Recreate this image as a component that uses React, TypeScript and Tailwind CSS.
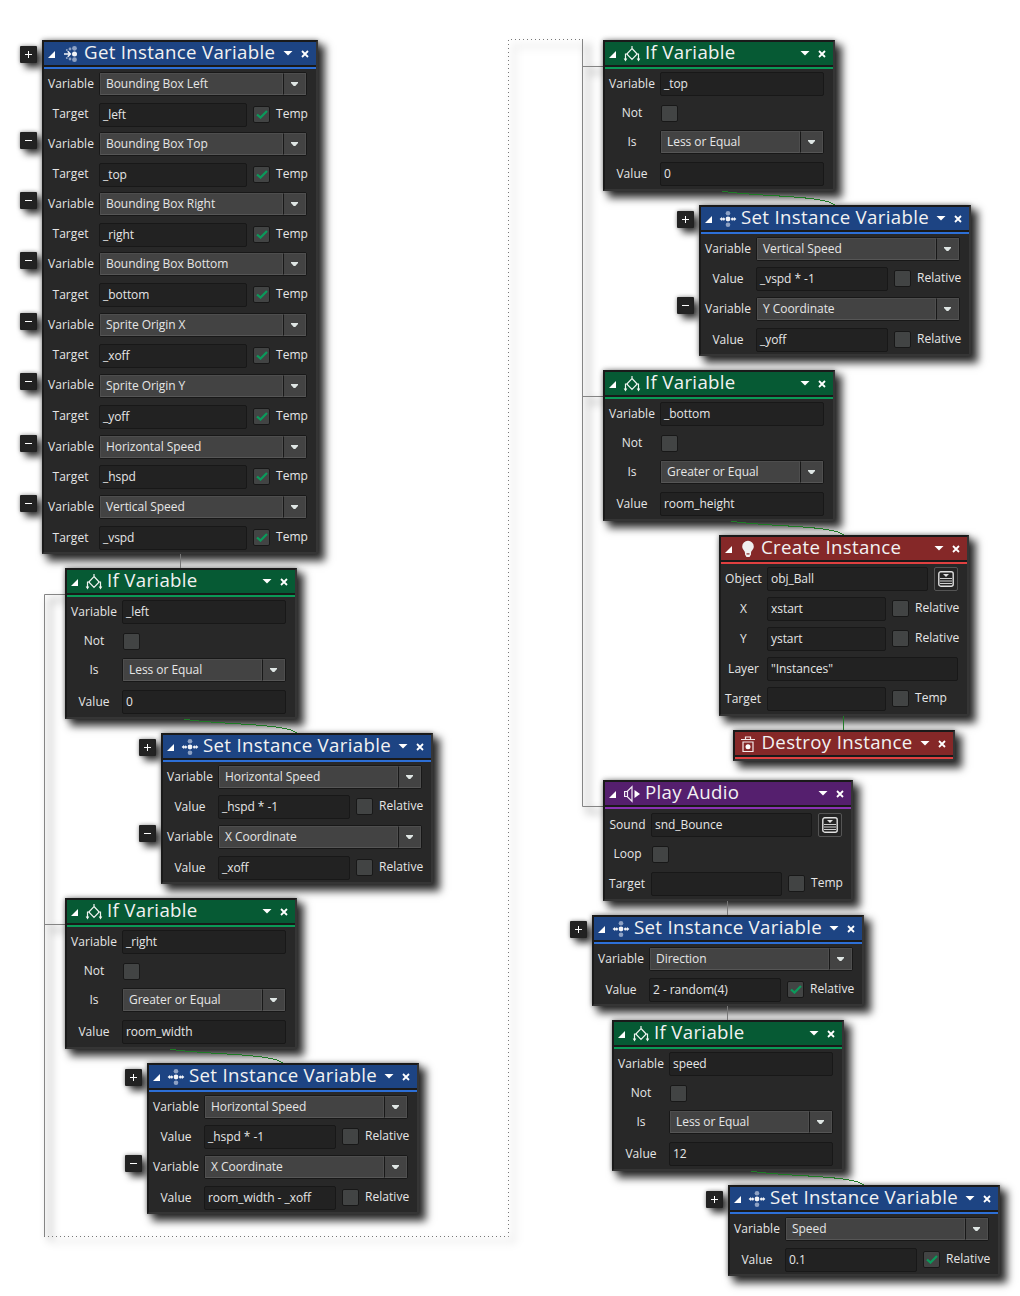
import React from "react";

type Tone = "blue" | "green" | "red" | "purple";
type IconKind = "get" | "set" | "if" | "bulb" | "trash" | "audio";

const tones: Record<Tone, { head: string; line: string }> = {
  blue: { head: "bg-[#1d4483]", line: "bg-[#2d6fd6]" },
  green: { head: "bg-[#065a34]", line: "bg-[#0a9a57]" },
  red: { head: "bg-[#852828]", line: "bg-[#e04040]" },
  purple: { head: "bg-[#551f6e]", line: "bg-[#8a32b4]" },
};

function Icon({ kind }: { kind: IconKind }) {
  return (
    <svg width="18" height="18" viewBox="0 0 18 18" className="block shrink-0" fill="none" stroke="none">
      {kind === "set" && (
        <g>
          <g fill="#8ea2c4">
            <circle cx="9" cy="3.2" r="2.3" />
            <circle cx="9" cy="14.8" r="2.3" />
          </g>
          <g fill="#f2f4f8">
            <circle cx="9" cy="9" r="2.4" />
            <circle cx="4.500" cy="9" r="1.5" />
            <circle cx="13.500" cy="9" r="1.5" />
            <path d="M.6 9 3 7v4zM17.400 9 15 7v4z" />
          </g>
        </g>
      )}
      {kind === "get" && (
        <g>
          <g fill="#8ea2c4">
            <circle cx="12.5" cy="3.3" r="2.4" />
            <circle cx="12.5" cy="14.7" r="2.4" />
            <circle cx="8" cy="4" r="1.4" />
            <circle cx="8" cy="14" r="1.4" />
            <circle cx="4.8" cy="5" r="1" />
            <circle cx="4.8" cy="13" r="1" />
          </g>
          <circle cx="12.5" cy="9" r="2.500" fill="#f2f4f8" />
          <path d="M2 9h6.500M5.700 6.300 8.400 9l-2.700 2.700" stroke="#f2f4f8" strokeWidth="1.500" />
        </g>
      )}
      {kind === "if" && (
        <g stroke="#f0f4f0" strokeWidth="1.200">
          <path d="M9 1v3M9 3.500 14.200 9 9 14.500 3.800 9zM5 9H2.500v6M13 9h2.500v6" />
          <path d="M.7 13.500h3.600L2.500 16.500zM13.700 13.500h3.600l-1.800 3z" fill="#f0f4f0" stroke="none" />
        </g>
      )}
      {kind === "bulb" && (
        <g fill="#f0f0f0">
          <path d="M9 .8a5.700 5.700 0 0 0-5.800 5.700C3.200 9.500 6 10.500 6 13v1.500l1.500 2.500h3L12 14.500V13c0-2.500 2.800-3.500 2.800-6.500A5.700 5.700 0 0 0 9 .8z" />
          <path d="M7.500 13.300h3v1.200h-3z" fill="#852828" />
        </g>
      )}
      {kind === "trash" && (
        <g stroke="#f5eaea" strokeWidth="1.200">
          <path d="M2 4.500h14M6.500 4.500v-2.500h5v2.500M4 7h10v9.500H4z" />
          <circle cx="9" cy="11.700" r="2.500" fill="#fff" stroke="none" />
        </g>
      )}
      {kind === "audio" && (
        <g stroke="#f4eef6" strokeWidth="1.200">
          <path d="M1.600 6.500h2.600L9 1.800v14.400L4.200 11.500H1.600zM4.500 6.500v5" />
          <path d="M11.500 5v8l5.500-4z" fill="#fff" stroke="none" />
        </g>
      )}
    </svg>
  );
}

function Node(props: {
  x: number; y: number; w: number; h: number; tone: Tone; icon: IconKind; title: string;
  open?: boolean; children?: React.ReactNode;
}) {
  const { x, y, w, h, tone, icon, title, open = true, children } = props;
  return (
    <section
      className="absolute flex flex-col border-2 border-[#1a1a1a] border-r-[#353535] border-b-[#353535] bg-[#282828] shadow-[6px_6px_8px_1px_rgba(0,0,0,0.8),0_0_5px_rgba(0,0,0,0.45)]"
      style={{ left: x, top: y, width: w, height: h }}
    >
      <header className={`flex h-[23px] shrink-0 items-center ${tones[tone].head}`}>
        {open && (
          <svg width="7" height="7" viewBox="0 0 7 7" className="ml-[4px] mt-px shrink-0"><path d="M7 0v7H0z" fill="#fff" /></svg>
        )}
        <span className={open ? "ml-[6.500px]" : "ml-[4px] mt-px"}><Icon kind={icon} /></span>
        <h2 className="-mt-[4px] ml-[4.500px] flex-1 whitespace-nowrap text-[18.67px] leading-[23px] tracking-[0.320px] text-[#f2f2f2]">{title}</h2>
        <svg width="10" height="5" viewBox="0 0 10 5" className="mr-[8px] shrink-0"><path d="M.5 0h9L5 4.600z" fill="#fff" /></svg>
        <svg width="8" height="8" viewBox="0 0 8 8" className="mr-[7.500px] shrink-0"><path d="m1 1 6 6M7 1 1 7" stroke="#fff" strokeWidth="1.800" /></svg>
      </header>
      <div className="h-[2px] shrink-0 bg-[#1a1a1a]" />
      <div className={`h-[2px] shrink-0 ${tones[tone].line}`} />
      {children}
    </section>
  );
}

// `gap` is the space above the row's 24px control; `raised` lifts the label by a pixel.
function Row({ label, gap, lw, raised, children }: { label: string; gap: number; lw: number; raised?: boolean; children: React.ReactNode }) {
  return (
    <div className="flex h-[24px] shrink-0 items-start text-[12px] text-[#e6e6e6]" style={{ marginTop: gap }}>
      <span
        className={`shrink-0 whitespace-nowrap text-center tracking-[0.05px] ${label === "Target" ? "pr-[2px]" : "pr-px"} ${raised ? "leading-[22px]" : "leading-[24px]"}`}
        style={{ width: lw }}
      >
        {label}
      </span>
      {children}
    </div>
  );
}

function Field({ w, value = "" }: { w: number; value?: string }) {
  return (
    <div className="h-[24px] shrink-0 whitespace-pre rounded-[2px] border border-[#181818] bg-[#222222] pl-[3px] leading-[22px] tracking-[-0.05px]" style={{ width: w }}>{value}</div>
  );
}

function Select({ w, value }: { w: number; value: string }) {
  return (
    <div className="flex h-[24px] shrink-0 rounded-[2px] border border-[#181818] bg-[#434343]" style={{ width: w }}>
      <span className="flex-1 whitespace-nowrap border border-[#4e4e4e] border-b-[#565656] pl-[5px] leading-[19px] tracking-[-0.05px]">{value}</span>
      <span className="flex w-[23px] items-center justify-center border border-l-[#181818] border-t-[#4e4e4e] border-r-[#4e4e4e] border-b-[#565656]">
        <svg width="7" height="4" viewBox="0 0 7 4"><path d="M0 0h7v1L4.300 4H2.700L0 1z" fill="#dfe6e4" /></svg>
      </span>
    </div>
  );
}

function Check({ on, text, first }: { on?: boolean; text?: string; first?: boolean }) {
  return (
    <>
      <span className={`flex size-[17px] shrink-0 items-center justify-center rounded-[2px] border border-[#181818] bg-[#424444] ${first ? "ml-px mt-[3.500px]" : "ml-[6px] mt-[3px]"}`}>
        {on && <svg width="12" height="9" viewBox="0 0 12 9"><path d="m1 4.500 3.500 3L11 1" fill="none" stroke="#0b9a5b" strokeWidth="2.300" /></svg>}
      </span>
      {text && <span className="ml-[6px] whitespace-nowrap leading-[22px] tracking-[0.05px]">{text}</span>}
    </>
  );
}

function Browse() {
  return (
    <span className="ml-[6px] flex size-[24px] items-center justify-center rounded-[2px] border border-[#555] bg-[#242424]">
      <svg width="16" height="16" viewBox="0 0 16 16" fill="none">
        <rect x=".8" y=".8" width="14.400" height="14.400" rx="2" stroke="#e0e0e0" strokeWidth="1.400" />
        <path d="M5 3h6L8 6z" fill="#e0e0e0" />
        <path d="M2 7.500h12M2 10h12M2 12.500h12" stroke="#cfcfcf" strokeWidth="1.200" />
      </svg>
    </span>
  );
}

function Toggle({ x, y, plus }: { x: number; y: number; plus?: boolean }) {
  return (
    <span
      className="absolute flex size-[17px] items-center justify-center rounded-[1px] bg-[#222] shadow-[5px_5px_7px_rgba(0,0,0,0.75),0_0_4px_rgba(0,0,0,0.4)]"
      style={{ left: x, top: y }}
    >
      <svg width="7" height="7" viewBox="0 0 7 7"><path d={plus ? "M0 3.500h7M3.500 0v7" : "M0 3.500h7"} stroke="#fff" /></svg>
    </span>
  );
}

function IfNode({ x, y, name, op, value }: { x: number; y: number; name: string; op: string; value: string }) {
  return (
    <Node x={x} y={y} w={232} h={151} tone="green" icon="if" title="If Variable">
      <Row label="Variable" gap={3} lw={55}><Field w={164} value={name} /></Row>
      <Row label="Not" gap={5} lw={55}><Check first /></Row>
      <Row label="Is" gap={5} lw={55}><Select w={164} value={op} /></Row>
      <Row label="Value" gap={8} lw={55}><Field w={164} value={value} /></Row>
    </Node>
  );
}

function SetNode({ x, y, items }: { x: number; y: number; items: { name: string; value: string; on?: boolean }[] }) {
  const two = items.length > 1;
  return (
    <>
      <Toggle x={x - 22} y={y + 6} plus />
      {two && <Toggle x={x - 22} y={y + 92} />}
      <Node x={x} y={y} w={272} h={two ? 151 : 91} tone="blue" icon="set" title="Set Instance Variable">
        {items.map((it, i) => (
          <React.Fragment key={i}>
            <Row label="Variable" gap={i ? 6 : 3} lw={55}><Select w={204} value={it.name} /></Row>
            <Row label="Value" gap={i || !two ? 7 : 6} lw={55}>
              <Field w={132} value={it.value} />
              <Check on={it.on} text="Relative" />
            </Row>
          </React.Fragment>
        ))}
      </Node>
    </>
  );
}

// [variable, target, control top, target top, raised target label], offsets from the node's top edge
const getRows: [string, string, number, number, boolean][] = [
  ["Bounding Box Left", "_left", 32, 63, true],
  ["Bounding Box Top", "_top", 92, 123, true],
  ["Bounding Box Right", "_right", 152, 183, true],
  ["Bounding Box Bottom", "_bottom", 212, 243, false],
  ["Sprite Origin X", "_xoff", 273, 304, true],
  ["Sprite Origin Y", "_yoff", 334, 365, true],
  ["Horizontal Speed", "_hspd", 395, 425, false],
  ["Vertical Speed", "_vspd", 455, 486, false],
];

const curves: [number, number][] = [[297, 733], [283, 1063], [835, 205], [844, 535], [864, 1185]];

export default function App() {
  return (
    <main className="relative h-[1296px] w-[1020px] overflow-hidden bg-white font-['Open_Sans',sans-serif]">
      <svg width="1020" height="1296" className="absolute inset-0" fill="none">
        <defs>
          <filter id="soft" filterUnits="userSpaceOnUse" x="0" y="0" width="1020" height="1296"><feGaussianBlur stdDeviation="4" /></filter>
        </defs>
        <g stroke="#000" strokeOpacity=".3" strokeWidth="3" filter="url(#soft)">
          <path d="M66 600H50V1240M50 930H66M588 44V812H603M588 72H603M588 402H603" />
          <path d="M50 1241H514V46H588" strokeOpacity=".1" />
        </g>
        <path d="M66 594.500H44.500V1236M44.500 924.500H66M582.500 39V806.500H603M582.500 66.500H603M582.500 396.500H603" stroke="#858585" />
        <path d="M44 1236.500H508.500V39.500H582" stroke="#777" strokeDasharray="1 3" />
      </svg>

      <Toggle x={20} y={46} plus />
      {[132, 192, 252, 313, 373, 435, 495].map((y) => <Toggle key={y} x={20} y={y} />)}
      <Node x={42} y={40} w={276} h={514} tone="blue" icon="get" title="Get Instance Variable">
        {getRows.map(([name, target, a, b, raised], i) => (
          <React.Fragment key={i}>
            <Row label="Variable" gap={i ? a - getRows[i - 1][3] - 24 : 3} lw={55} raised={name === "Sprite Origin Y"}>
              <Select w={208} value={name} />
            </Row>
            <Row label="Target" gap={b - a - 24} lw={55} raised={raised}>
              <Field w={148} value={target} />
              <Check on text="Temp" />
            </Row>
          </React.Fragment>
        ))}
      </Node>

      <IfNode x={65} y={568} name="_left" op="Less or Equal" value="0" />
      <SetNode x={161} y={733} items={[{ name: "Horizontal Speed", value: "_hspd * -1" }, { name: "X Coordinate", value: "_xoff" }]} />
      <IfNode x={65} y={898} name="_right" op="Greater or Equal" value="room_width" />
      <SetNode x={147} y={1063} items={[{ name: "Horizontal Speed", value: "_hspd * -1" }, { name: "X Coordinate", value: "room_width - _xoff" }]} />

      <IfNode x={603} y={40} name="_top" op="Less or Equal" value="0" />
      <SetNode x={699} y={205} items={[{ name: "Vertical Speed", value: "_vspd * -1" }, { name: "Y Coordinate", value: "_yoff" }]} />
      <IfNode x={603} y={370} name="_bottom" op="Greater or Equal" value="room_height" />

      <Node x={719} y={535} w={250} h={181} tone="red" icon="bulb" title="Create Instance">
        <Row label="Object" gap={3} lw={46}><Field w={161} value="obj_Ball" /><Browse /></Row>
        <Row label="X" gap={6} lw={46}><Field w={119} value="xstart" /><Check text="Relative" /></Row>
        <Row label="Y" gap={6} lw={46}><Field w={119} value="ystart" /><Check text="Relative" /></Row>
        <Row label="Layer" gap={6} lw={46}><Field w={191} value={'"Instances"'} /></Row>
        <Row label="Target" gap={6} lw={46}><Field w={119} /><Check text="Temp" /></Row>
      </Node>
      <Node x={733} y={730} w={222} h={31} tone="red" icon="trash" title="Destroy Instance" open={false} />

      <Node x={603} y={780} w={250} h={121} tone="purple" icon="audio" title="Play Audio">
        <Row label="Sound" gap={4} lw={46}><Field w={161} value="snd_Bounce" /><Browse /></Row>
        <Row label="Loop" gap={5} lw={46}><Check first /></Row>
        <Row label="Target" gap={6} lw={46}><Field w={131} /><Check text="Temp" /></Row>
      </Node>
      <SetNode x={592} y={915} items={[{ name: "Direction", value: "2 - random(4)", on: true }]} />
      <IfNode x={612} y={1020} name="speed" op="Less or Equal" value="12" />
      <SetNode x={728} y={1185} items={[{ name: "Speed", value: "0.1", on: true }]} />

      <svg width="1020" height="1296" className="pointer-events-none absolute inset-0" fill="none" shapeRendering="crispEdges">
        {curves.map(([x, y]) => (
          <path key={y} d={`M${x - 113} ${y - 14}C${x - 87} ${y - 8.5} ${x - 10} ${y - 10} ${x - 0.5} ${y}`} stroke="#1f7a26" />
        ))}
        <path d="M843.500 716v14" stroke="#1f7a26" />
        <path d="M180.500 554v14M727.500 901v14M727.500 1006v14" stroke="#777" />
      </svg>
    </main>
  );
}
